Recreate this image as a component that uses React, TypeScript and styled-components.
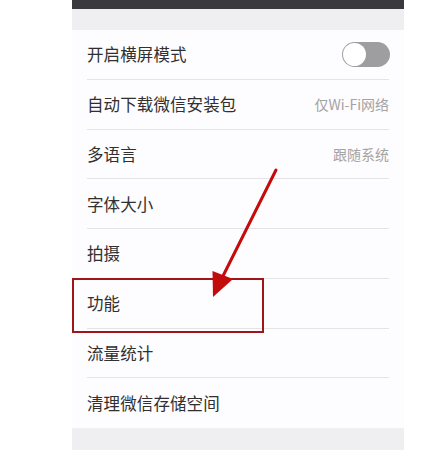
import React from "react";
import styled, { createGlobalStyle } from "styled-components";

const Global = createGlobalStyle`
  html, body { margin: 0; padding: 0; background: #ffffff; }
  body { font-family: "Noto Sans CJK SC", "Noto Sans", sans-serif; }
`;

const Stage = styled.div`
  position: relative;
  width: 447px;
  height: 450px;
  overflow: hidden;
  background: #ffffff;
`;

const Phone = styled.div`
  margin-left: 72px;
  width: 332px;
  height: 450px;
  display: flex;
  flex-direction: column;
  background: #efeef1;
`;

const TopBar = styled.div`
  height: 9px;
  background: #3a393e;
`;

const Gap = styled.div`
  height: 21px;
`;

const List = styled.div`
  display: flex;
  flex-direction: column;
  background: #fdfcfe;
`;

const Row = styled.div<{ $last?: boolean }>`
  height: 49.75px;
  box-sizing: border-box;
  margin: 0 15px;
  display: flex;
  align-items: center;
  justify-content: space-between;
  border-bottom: ${(p) => (p.$last ? "none" : "1px solid #e4e3e6")};
`;

const Label = styled.span`
  font-size: 16.5px;
  color: #303030;
  letter-spacing: 0.1px;
`;

const Value = styled.span`
  font-size: 14px;
  color: #a3a3a3;
`;

const Toggle = styled.div`
  width: 48px;
  height: 25px;
  border-radius: 13px;
  background: #9e9d9f;
  position: relative;
  margin-right: -1px;
  &::after {
    content: "";
    position: absolute;
    left: 1px;
    top: 1px;
    width: 23px;
    height: 23px;
    border-radius: 50%;
    background: #ffffff;
  }
`;

const Highlight = styled.div`
  position: absolute;
  left: 72px;
  top: 278px;
  width: 192px;
  height: 55px;
  box-sizing: border-box;
  border: 2.5px solid #9f1519;
`;

const Arrow = styled.svg`
  position: absolute;
  left: 0;
  top: 0;
  pointer-events: none;
`;

const rows: { label: string; value?: string; toggle?: boolean }[] = [
  { label: "开启横屏模式", toggle: true },
  { label: "自动下载微信安装包", value: "仅Wi-Fi网络" },
  { label: "多语言", value: "跟随系统" },
  { label: "字体大小" },
  { label: "拍摄" },
  { label: "功能" },
  { label: "流量统计" },
  { label: "清理微信存储空间" },
];

export default function App() {
  return (
    <Stage>
      <Global />
      <Phone>
        <TopBar />
        <Gap />
        <List>
          {rows.map((r, i) => (
            <Row key={r.label} $last={i === rows.length - 1}>
              <Label>{r.label}</Label>
              {r.value && <Value>{r.value}</Value>}
              {r.toggle && <Toggle />}
            </Row>
          ))}
        </List>
      </Phone>
      <Highlight />
      <Arrow width="447" height="450" viewBox="0 0 447 450">
        <line x1="276" y1="170" x2="222" y2="278" stroke="#c40b0b" strokeWidth="3" strokeLinecap="round" />
        <polygon points="213,297 212.5,271 233,279" fill="#c40b0b" />
      </Arrow>
    </Stage>
  );
}
